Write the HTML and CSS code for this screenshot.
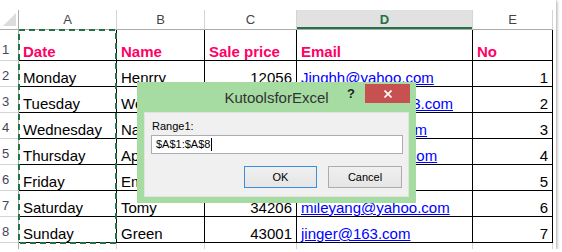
FILE: index.html
```html
<!DOCTYPE html>
<html lang="en">
<head>
<meta charset="UTF-8">
<title>KutoolsforExcel - Range</title>
<link rel="stylesheet" href="styles.css">
</head>
<body>

<!-- ─── SHEET ───────────────────────────────────────────────────────────── -->
<div class="sheet">
  <div class="grid">
    <!-- column headers -->
    <div class="corner">
      <svg width="13" height="13" viewBox="0 0 13 13"><polygon points="13,0 13,13 0,13" fill="#dcdcdc"/></svg>
    </div>
    <div class="col-hd">A</div>
    <div class="col-hd">B</div>
    <div class="col-hd">C</div>
    <div class="col-hd sel">D</div>
    <div class="col-hd">E</div>

    <!-- row 1 -->
    <div class="row-hd">1</div>
    <div class="cell head">Date</div>
    <div class="cell head">Name</div>
    <div class="cell head">Sale price</div>
    <div class="cell head">Email</div>
    <div class="cell head">No</div>

    <!-- row 2 -->
    <div class="row-hd">2</div>
    <div class="cell">Monday</div>
    <div class="cell">Henrry</div>
    <div class="cell num">12056</div>
    <div class="cell"><a class="link">Jinghh@yahoo.com</a></div>
    <div class="cell num">1</div>

    <!-- row 3 -->
    <div class="row-hd">3</div>
    <div class="cell">Tuesday</div>
    <div class="cell">Wendy</div>
    <div class="cell num">21256</div>
    <div class="cell"><a class="link">Kangkaihua@163.com</a></div>
    <div class="cell num">2</div>

    <!-- row 4 -->
    <div class="row-hd">4</div>
    <div class="cell">Wednesday</div>
    <div class="cell">Nancy</div>
    <div class="cell num">31523</div>
    <div class="cell"><a class="link">Nancy@gmail.com</a></div>
    <div class="cell num">3</div>

    <!-- row 5 -->
    <div class="row-hd">5</div>
    <div class="cell">Thursday</div>
    <div class="cell">Apple</div>
    <div class="cell num">23654</div>
    <div class="cell"><a class="link">Apple123@163.com</a></div>
    <div class="cell num">4</div>

    <!-- row 6 -->
    <div class="row-hd">6</div>
    <div class="cell">Friday</div>
    <div class="cell">Emilie</div>
    <div class="cell num">18976</div>
    <div class="cell"><a class="link">Emilie@163.com</a></div>
    <div class="cell num">5</div>

    <!-- row 7 -->
    <div class="row-hd">7</div>
    <div class="cell">Saturday</div>
    <div class="cell">Tomy</div>
    <div class="cell num">34206</div>
    <div class="cell"><a class="link">mileyang@yahoo.com</a></div>
    <div class="cell num">6</div>

    <!-- row 8 -->
    <div class="row-hd">8</div>
    <div class="cell">Sunday</div>
    <div class="cell">Green</div>
    <div class="cell num">43001</div>
    <div class="cell"><a class="link">jinger@163.com</a></div>
    <div class="cell num">7</div>

    <!-- row 9 (cut off) -->
    <div class="row-hd last"></div>
    <div class="cell empty"></div>
    <div class="cell empty"></div>
    <div class="cell empty"></div>
    <div class="cell empty"></div>
    <div class="cell empty"></div>
  </div>

  <!-- copy marquee around A1:A8 -->
  <svg class="ants" width="100" height="216" viewBox="0 0 100 216">
    <rect x="1" y="1" width="97" height="213" fill="none" stroke="#217346" stroke-width="2" stroke-dasharray="6 4"/>
  </svg>

  <!-- ─── DIALOG ──────────────────────────────────────────────────────── -->
  <div class="dialog">
    <div class="titlebar">
      <span></span>
      <span class="title">KutoolsforExcel</span>
      <div class="tb-btns">
        <span class="help">?</span>
        <span class="close">
          <svg width="8" height="8" viewBox="0 0 8 8"><path d="M0.5 0.5 L7.5 7.5 M7.5 0.5 L0.5 7.5" stroke="#fff" stroke-width="1.6"/></svg>
        </span>
      </div>
    </div>
    <div class="panel">
      <div class="lbl">Range1:</div>
      <div class="field">$A$1:$A$8<span class="caret"></span></div>
      <div class="actions">
        <button class="btn ok">OK</button>
        <button class="btn">Cancel</button>
      </div>
    </div>
  </div>
</div>

</body>
</html>
```

FILE: styles.css
```css
:root{
  --xl-green: #217346;     /* excel accent */
  --grid: #d4d4d4;         /* light gridlines */
  --hd-line: #ababab;      /* header separators */
  --win: #a6dca2;          /* active window frame */
}
*{ box-sizing:border-box; }

body{
  margin:0;
  background:#fff;
  font-family:"Liberation Sans", Arial, sans-serif;
}

/* the worksheet area */
.sheet{
  position:relative;
  width:556px;
  height:249px;
  padding-top:10px;
  overflow:hidden;
  box-shadow:1px 1px 3px rgba(0,0,0,.35);
}

.grid{
  display:grid;
  grid-template-columns:19px 98px 88px 92px 176px 80px;
  grid-template-rows:20px 31px repeat(7, 26px) 8px;
}

/* headers ------------------------------------------------------------- */
.corner{
  display:flex;
  align-items:flex-end;
  padding:0 0 3px 3px;
  border-right:1px solid var(--hd-line);
  border-bottom:1px solid var(--hd-line);
}
.corner svg{ display:block; }

.col-hd{
  display:flex;
  align-items:center;
  justify-content:center;
  font-size:13px;
  color:#444;
  border-right:1px solid var(--grid);
  border-bottom:1px solid var(--hd-line);
}
.col-hd.sel{
  background:#e1e1e1;
  color:var(--xl-green);
  font-weight:bold;
  box-shadow:inset 0 -2px 0 var(--xl-green);
}

.row-hd{
  display:flex;
  align-items:flex-end;
  padding:0 0 2px 2px;
  font-size:13px;
  line-height:17px;
  color:#445;
  border-right:1px solid var(--hd-line);
  border-bottom:1px solid var(--grid);
}
.row-hd.last{ border-bottom:none; }

/* cells --------------------------------------------------------------- */
.cell{
  display:flex;
  align-items:flex-end;
  padding:0 4px;
  font-size:15px;
  line-height:17px;
  color:#000;
  white-space:nowrap;
  overflow:hidden;
  border-right:1px solid #000;
  border-bottom:1px solid #000;
}
.cell.head{
  font-weight:bold;
  color:#ff0066;
}
.cell.num{ justify-content:flex-end; }
.cell.empty{
  border-right-color:var(--grid);
  border-bottom:none;
}
.link{
  color:#0000ff;
  text-decoration:underline;
}

/* marching ants */
.ants{
  position:absolute;
  left:18px; top:29px;
}

/* dialog -------------------------------------------------------------- */
.dialog{
  position:absolute;
  left:137px; top:82px;
  width:279px; height:121px;
  padding:0 7px 6px;
  background:var(--win);
  display:flex;
  flex-direction:column;
  font-family:"Liberation Sans", Arial, sans-serif;
}

.titlebar{
  height:30px;
  display:grid;
  grid-template-columns:1fr auto 1fr;
  align-items:center;
}
.title{
  font-size:15px;
  color:#333;
}
.tb-btns{
  justify-self:end;
  align-self:start;
  display:flex;
  margin-right:-1px;
}
.help{
  margin-top:4px;
  margin-right:10px;
  font-size:13px;
  font-weight:bold;
  color:#222;
}
.close{
  width:45px; height:19px;
  margin-top:2px;
  background:#c75050;
  display:flex;
  align-items:center;
  justify-content:center;
}
.close svg{ display:block; }

.panel{
  flex:1;
  background:#f0f0f0;
  border:1px solid #e2e2e2;
  padding:6px 5px 0 6px;
  font-size:11px;
  color:#000;
}
.lbl{
  padding-left:1px;
  line-height:14px;
}
.field{
  margin-top:2px;
  height:19px;
  background:#fff;
  border:1px solid #abadb3;
  padding-left:4px;
  line-height:17px;
  display:flex;
  align-items:center;
}
.caret{
  width:1px; height:13px;
  background:#000;
  margin-left:1px;
}

.actions{
  margin-top:12px;
  display:flex;
  justify-content:flex-end;
  gap:11px;
  padding-right:1px;
}
.btn{
  width:74px; height:22px;
  font:11px "Liberation Sans", Arial, sans-serif;
  color:#000;
  background:linear-gradient(#f0f0f0, #e5e5e5);
  border:1px solid #acacac;
  padding:0;
}
.btn.ok{
  width:73px;
  border-color:#3c8fdd;
}
```
